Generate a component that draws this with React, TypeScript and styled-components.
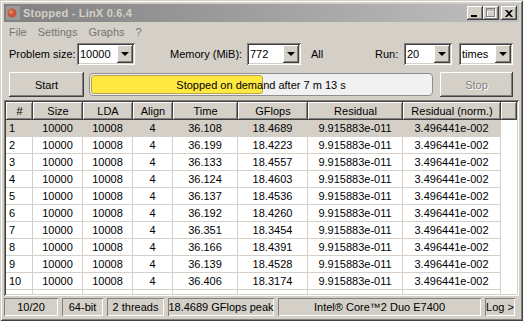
import React from "react";
import styled, { createGlobalStyle } from "styled-components";

const Global = createGlobalStyle`
  html, body { margin: 0; padding: 0; background: #d4d0c8; }
  * { box-sizing: border-box; }
`;

const FACE = "#d4d0c8";
const SHADOW = "#808080";
const DARK = "#404040";

const raised = `
  box-shadow: inset -1px -1px 0 ${DARK}, inset 1px 1px 0 #fff, inset -2px -2px 0 ${SHADOW}, inset 2px 2px 0 ${FACE};
`;
const sunken = `
  box-shadow: inset 1px 1px 0 ${SHADOW}, inset -1px -1px 0 #fff, inset 2px 2px 0 ${DARK}, inset -2px -2px 0 ${FACE};
`;

const Window = styled.div`
  width: 523px;
  height: 321px;
  padding: 4px;
  background: ${FACE};
  box-shadow: inset 1px 1px 0 ${FACE}, inset -1px -1px 0 ${DARK}, inset 2px 2px 0 #fff, inset -2px -2px 0 ${SHADOW};
  display: flex;
  flex-direction: column;
  font-family: "Liberation Sans", Arial, sans-serif;
  font-size: 11px;
  color: #000;
  overflow: hidden;
`;

const TitleBar = styled.div`
  height: 18px;
  flex: none;
  background: linear-gradient(to right, #808080, #c0c0c0);
  display: flex;
  align-items: center;
  padding: 0 2px 0 1px;
`;

const TitleIcon = styled.svg`
  width: 16px;
  height: 16px;
  margin-right: 2px;
  flex: none;
`;

const TitleText = styled.div`
  flex: 1;
  color: ${FACE};
  font-weight: bold;
  font-size: 11px;
  letter-spacing: 0.2px;
  white-space: nowrap;
`;

const CaptionButton = styled.div<{ $gap?: number }>`
  width: 16px;
  height: 14px;
  margin-left: ${(p) => p.$gap ?? 0}px;
  background: ${FACE};
  ${raised}
  display: flex;
  align-items: center;
  justify-content: center;
  flex: none;
`;

const MenuBar = styled.div`
  height: 19px;
  flex: none;
  display: flex;
  align-items: center;
  gap: 11px;
  padding-left: 5px;
  color: #747474;
`;

const MenuItem = styled.span``;

const ControlsRow = styled.div`
  margin-top: 2px;
  height: 22px;
  flex: none;
  display: flex;
  align-items: center;
  padding-left: 5px;
`;

const Label = styled.div<{ $w: number }>`
  width: ${(p) => p.$w}px;
  flex: none;
  white-space: nowrap;
`;

const Spacer = styled.div<{ $w: number }>`
  width: ${(p) => p.$w}px;
  flex: none;
`;

const Combo = styled.div<{ $w: number }>`
  width: ${(p) => p.$w}px;
  height: 22px;
  flex: none;
  background: #fff;
  ${sunken}
  display: flex;
  align-items: center;
  padding: 2px;
`;

const ComboText = styled.div`
  flex: 1;
  padding-left: 1px;
`;

const ComboButton = styled.div`
  width: 16px;
  height: 18px;
  background: ${FACE};
  ${raised}
  display: flex;
  align-items: center;
  justify-content: center;
`;

const Arrow = styled.div`
  width: 0;
  height: 0;
  border-left: 4px solid transparent;
  border-right: 4px solid transparent;
  border-top: 4px solid #000;
`;

const ActionRow = styled.div`
  margin-top: 7px;
  height: 25px;
  flex: none;
  display: flex;
  align-items: center;
  padding-left: 5px;
`;

const PushButton = styled.div<{ $w: number; $disabled?: boolean; $ml?: number }>`
  width: ${(p) => p.$w}px;
  height: 25px;
  margin-left: ${(p) => p.$ml ?? 0}px;
  flex: none;
  background: ${FACE};
  ${raised}
  display: flex;
  align-items: center;
  justify-content: center;
  color: ${(p) => (p.$disabled ? SHADOW : "#000")};
  text-shadow: ${(p) => (p.$disabled ? "1px 1px 0 #fff" : "none")};
`;

const Progress = styled.div`
  width: 344px;
  height: 23px;
  margin-left: 5px;
  flex: none;
  position: relative;
  border: 1px solid #8e8e8e;
  border-radius: 4px;
  background: #f1f1f1;
  padding: 1px;
  display: flex;
`;

const Chunk = styled.div`
  height: 100%;
  background: #ffe840;
  border: 1px solid #b8a450;
  border-radius: 3px;
`;

const ProgressText = styled.div`
  position: absolute;
  inset: 0;
  display: flex;
  align-items: center;
  justify-content: center;
  white-space: nowrap;
`;

const TableFrame = styled.div`
  margin-top: 3px;
  flex: 1;
  min-height: 0;
  padding: 2px;
  ${sunken}
  background: #fff;
  display: flex;
  flex-direction: column;
`;

const COLS = "27px 50px 50px 40px 65px 70px 95px 98px 1fr";

const HeaderRow = styled.div`
  height: 18px;
  flex: none;
  display: grid;
  grid-template-columns: ${COLS};
`;

const HeaderCell = styled.div`
  background: ${FACE};
  box-shadow: inset -1px -1px 0 ${DARK}, inset 1px 1px 0 #fff, inset -2px -2px 0 ${SHADOW};
  display: flex;
  align-items: center;
  justify-content: center;
  padding-bottom: 1px;
  white-space: nowrap;
`;

const Row = styled.div<{ $selected?: boolean }>`
  height: 17px;
  flex: none;
  display: grid;
  grid-template-columns: ${COLS};
  background: ${(p) => (p.$selected ? FACE : "#fff")};
`;

const Cell = styled.div<{ $left?: boolean }>`
  border-right: 1px solid ${FACE};
  border-bottom: 1px solid ${FACE};
  display: flex;
  align-items: center;
  justify-content: ${(p) => (p.$left ? "flex-start" : "center")};
  padding-left: ${(p) => (p.$left ? "3px" : "0")};
  white-space: nowrap;
`;

const EndCell = styled.div`
  background: #fff;
`;

const FillerRow = styled.div`
  flex: 1;
  display: grid;
  grid-template-columns: ${COLS};
`;

const FillerCell = styled.div`
  border-right: 1px solid ${FACE};
`;

const StatusBar = styled.div`
  margin-top: 2px;
  margin-bottom: 1px;
  height: 18px;
  flex: none;
  display: flex;
  gap: 4px;
`;

const Panel = styled.div<{ $w: number }>`
  width: ${(p) => p.$w}px;
  flex: none;
  box-shadow: inset 1px 1px 0 ${SHADOW}, inset -1px -1px 0 #fff;
  display: flex;
  align-items: center;
  justify-content: center;
  white-space: nowrap;
  overflow: hidden;
`;

const rows: [string, string][] = [
  ["36.108", "18.4689"],
  ["36.199", "18.4223"],
  ["36.133", "18.4557"],
  ["36.124", "18.4603"],
  ["36.137", "18.4536"],
  ["36.192", "18.4260"],
  ["36.351", "18.3454"],
  ["36.166", "18.4391"],
  ["36.139", "18.4528"],
  ["36.406", "18.3174"],
];

const headers = ["#", "Size", "LDA", "Align", "Time", "GFlops", "Residual", "Residual (norm.)", ""];

function ComboBox({ w, value }: { w: number; value: string }) {
  return (
    <Combo $w={w}>
      <ComboText>{value}</ComboText>
      <ComboButton>
        <Arrow />
      </ComboButton>
    </Combo>
  );
}

export default function App() {
  return (
    <>
      <Global />
      <Window>
        <TitleBar>
          <TitleIcon viewBox="0 0 16 16">
            <rect x="1" y="1" width="14" height="14" rx="1" fill="#9a9a9a" />
            <circle cx="7" cy="8" r="4.5" fill="#c8553a" />
            <circle cx="6" cy="7" r="2" fill="#e08a60" />
          </TitleIcon>
          <TitleText>Stopped - LinX 0.6.4</TitleText>
          <CaptionButton>
            <svg width="8" height="7" viewBox="0 0 8 7">
              <rect x="0" y="5" width="6" height="2" fill="#000" />
            </svg>
          </CaptionButton>
          <CaptionButton>
            <svg width="10" height="10" viewBox="0 0 10 10">
              <rect x="1.5" y="1.5" width="8" height="8" fill="none" stroke="#fff" />
              <rect x="1.5" y="2.5" width="8" height="1" fill="#fff" />
              <rect x="0.5" y="0.5" width="8" height="8" fill="none" stroke="#808080" />
              <rect x="0.5" y="1.5" width="8" height="1" fill="#808080" />
            </svg>
          </CaptionButton>
          <CaptionButton $gap={2}>
            <svg width="8" height="7" viewBox="0 0 8 7">
              <path d="M0 0 L2 0 L4 2 L6 0 L8 0 L5 3.5 L8 7 L6 7 L4 5 L2 7 L0 7 L3 3.5 Z" fill="#000" />
            </svg>
          </CaptionButton>
        </TitleBar>

        <MenuBar>
          <MenuItem>File</MenuItem>
          <MenuItem>Settings</MenuItem>
          <MenuItem>Graphs</MenuItem>
          <MenuItem>?</MenuItem>
        </MenuBar>

        <ControlsRow>
          <Label $w={68}>Problem size:</Label>
          <ComboBox w={58} value="10000" />
          <Spacer $w={35} />
          <Label $w={77}>Memory (MiB):</Label>
          <ComboBox w={54} value="772" />
          <Spacer $w={10} />
          <Label $w={64}>All</Label>
          <Label $w={29}>Run:</Label>
          <ComboBox w={48} value="20" />
          <Spacer $w={7} />
          <ComboBox w={54} value="times" />
        </ControlsRow>

        <ActionRow>
          <PushButton $w={75}>Start</PushButton>
          <Progress>
            <Chunk style={{ width: "50.5%" }} />
            <ProgressText>Stopped on demand after 7 m 13 s</ProgressText>
          </Progress>
          <PushButton $w={73} $ml={7} $disabled>
            Stop
          </PushButton>
        </ActionRow>

        <TableFrame>
          <HeaderRow>
            {headers.map((h, i) => (
              <HeaderCell key={i}>{h}</HeaderCell>
            ))}
          </HeaderRow>
          {rows.map(([t, g], i) => (
            <Row key={i} $selected={i === 0}>
              <Cell $left>{i + 1}</Cell>
              <Cell>10000</Cell>
              <Cell>10008</Cell>
              <Cell>4</Cell>
              <Cell>{t}</Cell>
              <Cell>{g}</Cell>
              <Cell>9.915883e-011</Cell>
              <Cell>3.496441e-002</Cell>
              <EndCell />
            </Row>
          ))}
          <FillerRow>
            {Array.from({ length: 8 }).map((_, i) => (
              <FillerCell key={i} />
            ))}
          </FillerRow>
        </TableFrame>

        <StatusBar>
          <Panel $w={54}>10/20</Panel>
          <Panel $w={41}>64-bit</Panel>
          <Panel $w={57}>2 threads</Panel>
          <Panel $w={106}>18.4689 GFlops peak</Panel>
          <Panel $w={203}>Intel® Core™2 Duo E7400</Panel>
          <Panel $w={30}>Log &gt;</Panel>
        </StatusBar>
      </Window>
    </>
  );
}
